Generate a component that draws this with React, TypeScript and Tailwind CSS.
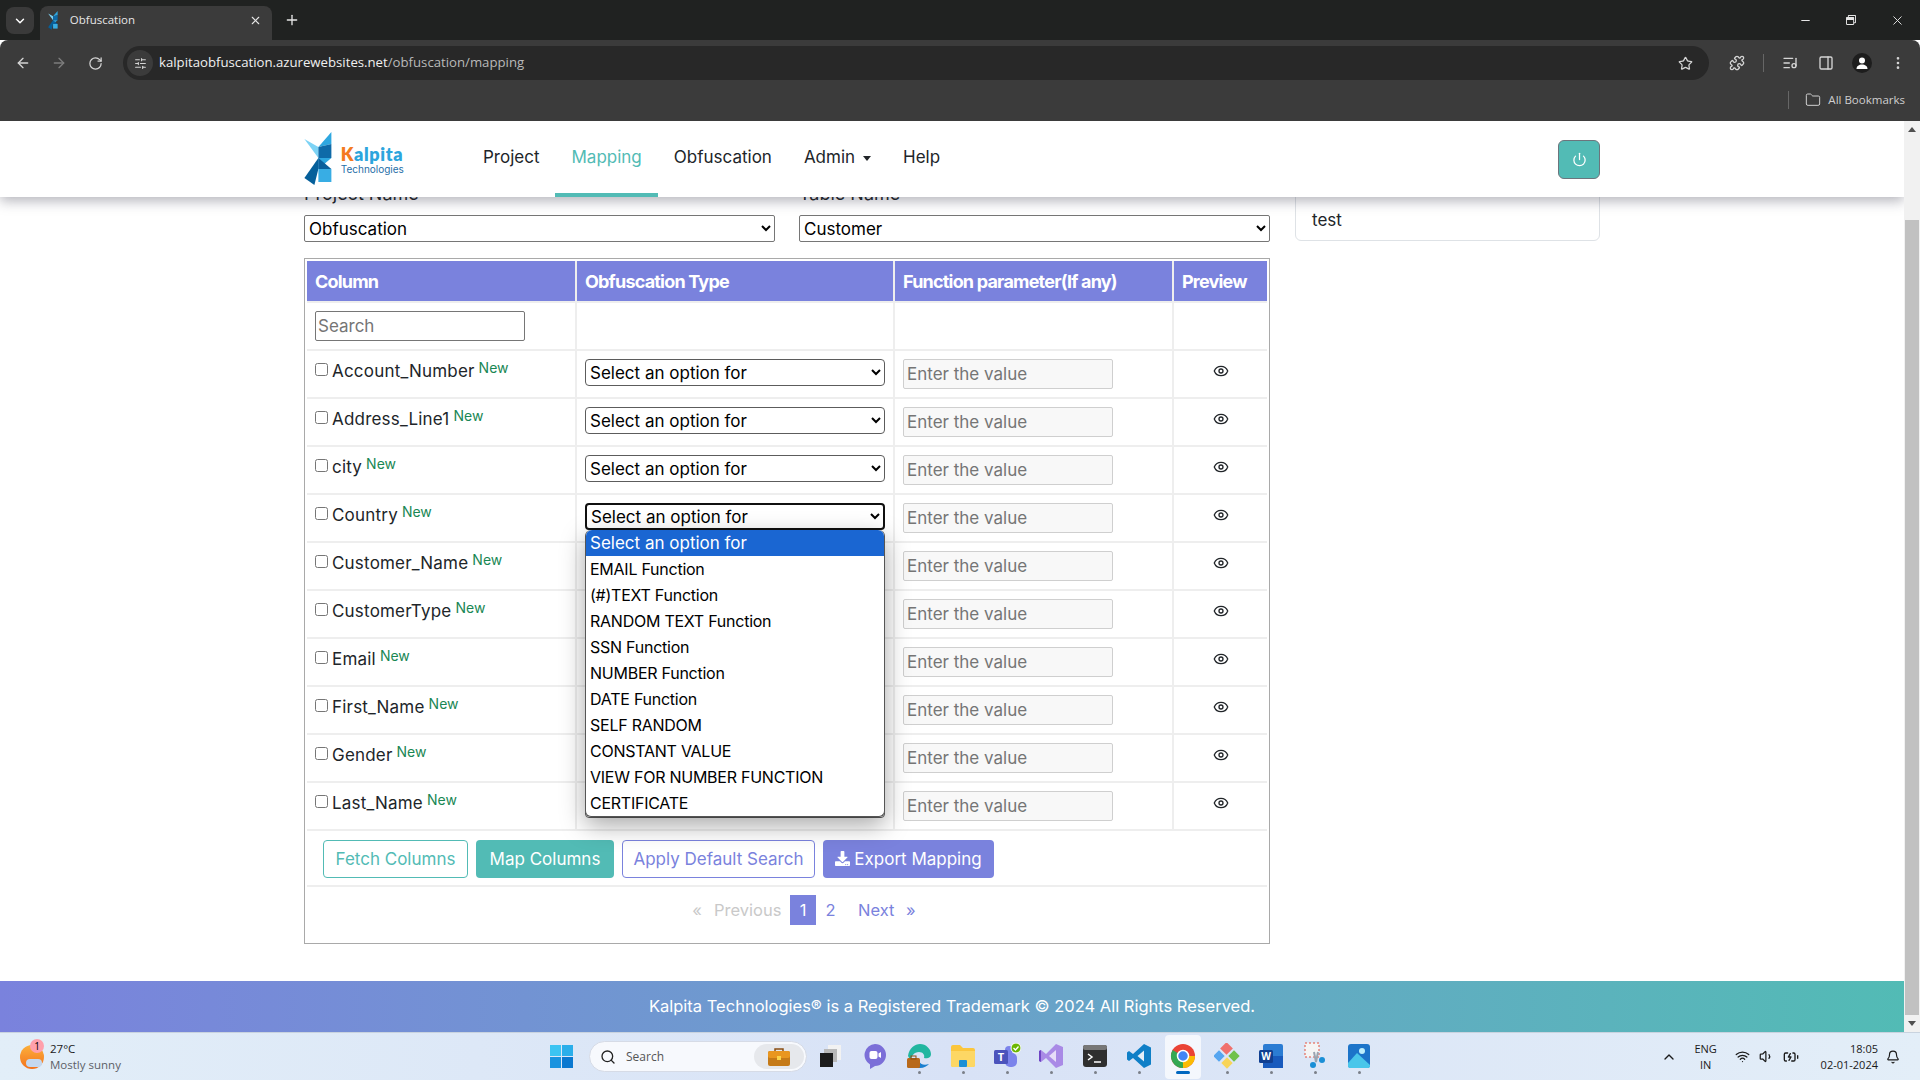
import React from 'react';
import {
  ArrowLeft,
  ArrowRight,
  Bell,
  BatteryCharging,
  ChevronDown,
  ChevronUp,
  Eye,
  Folder,
  ListMusic,
  Minus,
  MoreVertical,
  PanelRight,
  Plus,
  Power,
  Puzzle,
  RotateCw,
  Search,
  SlidersHorizontal,
  Star,
  Volume1,
  Wifi,
  X,
} from 'lucide-react';
import { FaDownload, FaRegWindowRestore } from 'react-icons/fa';

const columns = [
  'Account_Number',
  'Address_Line1',
  'city',
  'Country',
  'Customer_Name',
  'CustomerType',
  'Email',
  'First_Name',
  'Gender',
  'Last_Name',
];

const functionOptions = [
  'Select an option for',
  'EMAIL Function',
  '(#)TEXT Function',
  'RANDOM TEXT Function',
  'SSN Function',
  'NUMBER Function',
  'DATE Function',
  'SELF RANDOM',
  'CONSTANT VALUE',
  'VIEW FOR NUMBER FUNCTION',
  'CERTIFICATE',
];

const LogoMark: React.FC<{ size?: number }> = ({ size = 54 }) => (
  <svg width={size * 0.57} height={size} viewBox="0 0 30 54">
    <polygon points="0,7 14,15 14,26" fill="#7dd3f5" />
    <polygon points="14,15 27,0 27,12" fill="#2ea7e0" />
    <polygon points="14,15 27,12 27,26 14,26" fill="#0e6aa8" />
    <polygon points="14,26 27,26 14,37" fill="#2ea7e0" />
    <polygon points="14,26 14,37 27,37" fill="#0b5f9c" />
    <polygon points="14,26 0,46 10,53 14,37" fill="#055f9a" />
    <polygon points="27,37 14,37 14,50 27,50" fill="#38ade4" />
  </svg>
);

const TaskIcon: React.FC<{ children: React.ReactNode; dot?: boolean; active?: boolean }> = ({ children, dot, active }) => (
  <div className={`w-[36px] h-[44px] flex flex-col items-center justify-center rounded ${active ? 'bg-white/70' : ''}`}>
    <div className="h-[28px] flex items-center justify-center mt-[2px]">{children}</div>
    {active ? (
      <div className="w-[14px] h-[3px] rounded-full bg-[#0067c0] mt-[1px]" />
    ) : (
      <div className={`w-[3px] h-[3px] rounded-full mt-[1px] ${dot ? 'bg-[#7a7f88]' : 'bg-transparent'}`} />
    )}
  </div>
);

const BrowserChrome: React.FC = () => (
  <div className="shrink-0 font-['Open_Sans',sans-serif]">
    <div className="h-[40px] bg-[#202221] flex items-end pl-[6px] relative">
      <div className="w-[28px] h-[27px] mb-[6px] rounded-lg bg-[#3a3a3a] flex items-center justify-center text-white">
        <ChevronDown size={14} strokeWidth={2.5} />
      </div>
      <div className="ml-[6px] w-[232px] h-[34px] bg-[#3b3b3b] rounded-t-lg flex items-center pl-[8px] pr-[10px] pb-[6px]">
        <LogoMark size={19} />
        <span className="ml-[11px] text-[11.5px] text-[#e6e6e6] flex-1">Obfuscation</span>
        <X size={13} className="text-[#e6e6e6]" />
      </div>
      <Plus size={16} className="text-[#e6e6e6] ml-[12px] mb-[12px]" />
      <div className="ml-auto h-[40px] flex items-center text-[#e6e6e6]">
        <div className="w-[46px] flex justify-center"><Minus size={13} /></div>
        <div className="w-[46px] flex justify-center"><FaRegWindowRestore size={10} /></div>
        <div className="w-[46px] flex justify-center"><X size={15} strokeWidth={1.5} /></div>
      </div>
    </div>
    <div className="h-[81px] bg-[#3b3b3b] rounded-t-lg">
      <div className="h-[46px] flex items-center pl-[15px] pr-[14px] text-[#d5d5d5]">
        <ArrowLeft size={16} />
        <ArrowRight size={16} className="ml-[20px] text-[#7d7d7d]" />
        <RotateCw size={15} className="ml-[21px]" />
        <div className="ml-[20px] h-[34px] flex-1 bg-[#282828] rounded-full flex items-center pl-[4px] pr-[16px]">
          <div className="w-[26px] h-[26px] rounded-full bg-[#3b3b3b] flex items-center justify-center">
            <SlidersHorizontal size={13} />
          </div>
          <span className="ml-[6px] text-[13.2px] text-[#f0f0f0]">
            kalpitaobfuscation.azurewebsites.net<span className="text-[#b9b9b9]">/obfuscation/mapping</span>
          </span>
          <Star size={15} className="ml-auto" />
        </div>
        <Puzzle size={16} className="ml-[20px]" />
        <div className="ml-[18px] w-px h-[18px] bg-[#666]" />
        <ListMusic size={16} className="ml-[18px]" />
        <PanelRight size={16} className="ml-[20px]" />
        <div className="ml-[18px] w-[20px] h-[20px] rounded-full bg-[#1d1d1d] flex items-center justify-center">
          <svg width="14" height="14" viewBox="0 0 14 14" fill="#fff">
            <circle cx="7" cy="4.500" r="3" />
            <path d="M1.500 13c0-3 2.500-4.500 5.500-4.500s5.500 1.500 5.500 4.500z" />
          </svg>
        </div>
        <MoreVertical size={16} className="ml-[18px]" />
      </div>
      <div className="h-[35px] pb-[8px] flex items-center justify-end pr-[15px] text-[#cfcfcf]">
        <div className="w-px h-[18px] bg-[#666] mr-[16px]" />
        <Folder size={16} strokeWidth={1.5} />
        <span className="ml-[7px] text-[11.5px]">All Bookmarks</span>
      </div>
    </div>
  </div>
);

const TopNav: React.FC = () => (
  <nav className="relative z-10 h-[76px] bg-white shadow-[0_4px_12px_rgba(40,40,60,0.35)]">
    <div className="w-[1296px] mx-auto h-full flex items-stretch">
      <div className="w-[163px] flex items-center">
        <LogoMark />
        <div className="ml-[6px] pt-[2px]">
          <div className="text-[18px] leading-[18px] font-extrabold text-[#2ca5dd] font-['Lato',sans-serif] tracking-[0.6px]">
            <span className="text-[#f47a20]">K</span>alpita
          </div>
          <div className="text-[10px] leading-[12px] text-[#1f6fa8]">Technologies</div>
        </div>
      </div>
      <a className="px-4 pb-[2px] flex items-center text-[17px] text-[#212529]">Project</a>
      <a className="px-4 flex items-center text-[17px] text-[#52bbb5] border-b-4 border-[#52bbb5] pt-[2px]">Mapping</a>
      <a className="px-4 pb-[2px] flex items-center text-[17px] text-[#212529]">Obfuscation</a>
      <a className="px-4 pb-[2px] flex items-center text-[17px] text-[#212529]">
        Admin
        <span className="ml-[8px] w-0 h-0 border-x-[4.5px] border-x-transparent border-t-[5px] border-t-[#212529]" />
      </a>
      <a className="px-4 pb-[2px] flex items-center text-[17px] text-[#212529]">Help</a>
      <button className="ml-auto self-start mt-[19px] w-[42px] h-[39px] rounded-md bg-[#52bbb5] border border-[#6c757d] flex items-center justify-center text-white">
        <Power size={15} />
      </button>
    </div>
  </nav>
);

const MappingRow: React.FC<{ name: string; open?: boolean }> = ({ name, open }) => (
  <tr className="h-[48px]">
    <td className="border-r-2 border-b-2 border-[#eeeeee] px-2 pt-[8px] align-top">
      <div className="flex items-start h-[28px]">
        <input type="checkbox" className="w-[13px] h-[13px] mt-[4px] mr-[4px]" />
        <span className="text-[17px] leading-[24px] text-[#212529] tracking-[0.2px]">{name}</span>
        <span className="ml-[4px] text-[14px] leading-[18px] text-[#198754]">New</span>
      </div>
    </td>
    <td className="border-r-2 border-b-2 border-[#eeeeee] px-2 pt-[8px] align-top">
      <div className="relative w-[300px]">
        <select className={`block w-[300px] h-[27px] bg-white rounded-[4px] text-[17px] text-black ${open ? 'border-2 border-[#101010]' : 'border border-[#5c5c5c]'}`}>
          <option>Select an option for</option>
        </select>
        {open && (
          <div className="absolute z-20 top-full left-0 w-[300px] bg-white rounded-md border-b border-x border-[#555] shadow-[0_8px_24px_rgba(0,0,0,0.35)]">
            {functionOptions.map((option, i) => (
              <div
                key={option}
                className={`h-[26px] px-[4px] leading-[26px] whitespace-nowrap ${i === 0 ? 'bg-[#1a66d2] text-white rounded-t-md text-[17px]' : 'text-black text-[16px] tracking-[-0.25px]'}`}
              >
                {option}
              </div>
            ))}
          </div>
        )}
      </div>
    </td>
    <td className="border-r-2 border-b-2 border-[#eeeeee] px-2 pt-[8px] align-top">
      <input
        placeholder="Enter the value"
        className="block w-[210px] h-[30px] bg-[#f8f8f8] border border-[#cfcfcf] rounded-[2px] px-[3px] text-[17px] placeholder:text-[#757575]"
      />
    </td>
    <td className="border-b-2 border-[#eeeeee] pt-[12px] align-top">
      <Eye size={16} className="mx-auto text-[#212529]" />
    </td>
  </tr>
);

const MappingTable: React.FC = () => (
  <div className="border border-[#a9a9a9] p-[2px]">
    <table className="w-[960px] table-fixed border-separate border-spacing-0">
      <colgroup>
        <col className="w-[270px]" />
        <col className="w-[318px]" />
        <col className="w-[279px]" />
        <col className="w-[93px]" />
      </colgroup>
      <thead>
        <tr className="h-[42px]">
          {['Column', 'Obfuscation Type', 'Function parameter(If any)', 'Preview'].map((title, i) => (
            <th
              key={title}
              className={`bg-[#7a82dd] border-b-2 border-[#eeeeee] text-left text-white text-[18px] font-bold tracking-[-0.8px] ${i < 3 ? 'border-r-2 pl-[8px]' : 'pl-[8px]'}`}
            >
              {title}
            </th>
          ))}
        </tr>
      </thead>
      <tbody>
        <tr className="h-[48px]">
          <td className="border-r-2 border-b-2 border-[#eeeeee] px-2 align-middle">
            <input
              placeholder="Search"
              className="block w-[210px] h-[30px] bg-white border border-[#767676] rounded-[2px] px-[2px] text-[17px] placeholder:text-[#757575]"
            />
          </td>
          <td className="border-r-2 border-b-2 border-[#eeeeee]" />
          <td className="border-r-2 border-b-2 border-[#eeeeee]" />
          <td className="border-b-2 border-[#eeeeee]" />
        </tr>
        {columns.map((name) => (
          <MappingRow key={name} name={name} open={name === 'Country'} />
        ))}
        <tr className="h-[56px]">
          <td colSpan={4} className="border-b-2 border-[#eeeeee] pl-[16px] pt-[1px]">
            <div className="flex gap-2 text-[17px] leading-[36px]">
              <button className="w-[145px] h-[38px] rounded-[4px] border border-[#52bbb5] text-[#52bbb5] bg-white">Fetch Columns</button>
              <button className="w-[138px] h-[38px] rounded-[4px] bg-[#52bbb5] text-white">Map Columns</button>
              <button className="w-[193px] h-[38px] rounded-[4px] border border-[#7a82dd] text-[#7a82dd] bg-white">Apply Default Search</button>
              <button className="w-[171px] h-[38px] rounded-[4px] bg-[#7a82dd] text-white flex items-center justify-center gap-[4px]">
                <FaDownload size={15} />
                Export Mapping
              </button>
            </div>
          </td>
        </tr>
      </tbody>
    </table>
    <div className="h-[54px] pt-[8px] flex items-start pl-[377px] text-[16.5px] leading-[30px]">
      <span className="w-[26px] text-[#c9c9c9] text-center">«</span>
      <span className="text-[#c9c9c9] ml-[4px] w-[76px]">Previous</span>
      <span className="w-[26px] h-[30px] bg-[#7a82dd] text-white text-center">1</span>
      <span className="w-[34px] pr-[5px] text-[#7a82dd] text-center">2</span>
      <span className="text-[#7a82dd] ml-[8px] w-[42px] text-left">Next</span>
      <span className="text-[#7a82dd] ml-[6px]">»</span>
    </div>
  </div>
);

const WindowsTaskbar: React.FC = () => (
  <div className="shrink-0 h-[48px] bg-gradient-to-r from-[#e2eef8] via-[#d8e2f6] to-[#e3eef8] border-t border-[#c9d3df] flex items-center font-['Open_Sans',sans-serif] text-[#1a1a1a] relative">
    <div className="w-[550px] pl-[20px] flex items-center">
      <div className="relative w-[24px] h-[24px] rounded-full bg-gradient-to-b from-[#fbb03b] to-[#f2711c]">
        <div className="absolute left-[10px] top-[-6px] w-[14px] h-[14px] rounded-full bg-[#ffa0ac] text-[10px] leading-[14px] text-center text-black">1</div>
        <div className="absolute left-[6px] bottom-[2px] w-[16px] h-[8px] rounded-full bg-[#c4d8f0]" />
      </div>
      <div className="ml-[6px]">
        <div className="text-[11.5px] leading-[16px]">27°C</div>
        <div className="text-[11.5px] leading-[16px] text-[#5c6066]">Mostly sunny</div>
      </div>
    </div>
    <div className="flex items-center">
      <svg width="23" height="23" viewBox="0 0 23 23" className="mr-[16px]">
        <rect x="0" y="0" width="11" height="11" fill="#3cc4f2" />
        <rect x="12" y="0" width="11" height="11" fill="#2aaeea" />
        <rect x="0" y="12" width="11" height="11" fill="#1a93df" />
        <rect x="12" y="12" width="11" height="11" fill="#0a78d0" />
      </svg>
      <div className="w-[218px] h-[31px] rounded-full bg-[#f7f9fd] border border-[#d6dbe6] flex items-center pl-[10px] pr-[2px]">
        <Search size={16} className="text-[#222]" />
        <span className="ml-[10px] text-[12px] text-[#555]">Search</span>
        <div className="ml-auto w-[50px] h-[25px] rounded-full bg-[#e6e8ec] flex items-center justify-center">
          <svg width="24" height="20" viewBox="0 0 24 20">
            <path d="M8 4V2h8v2" fill="none" stroke="#8a4e12" strokeWidth="1.500" />
            <rect x="1" y="4" width="22" height="15" rx="2" fill="#c57a18" />
            <rect x="1" y="4" width="22" height="7" rx="2" fill="#e9961f" />
            <rect x="10" y="9" width="4" height="4" fill="#fbd34a" />
          </svg>
        </div>
      </div>
    </div>
    <div className="ml-[6px] flex items-center gap-[8px]">
      <TaskIcon>
        <svg width="24" height="24" viewBox="0 0 24 24">
          <rect x="9" y="1" width="13" height="15" fill="#f2f2f2" />
          <rect x="5" y="5" width="13" height="13" fill="#b9b9b9" />
          <rect x="1" y="9" width="13" height="14" fill="#1c1c1c" />
        </svg>
      </TaskIcon>
      <TaskIcon>
        <svg width="24" height="26" viewBox="0 0 24 26">
          <path d="M12 1a11 11 0 0 1 0 22l-5 3v-4.500A11 11 0 0 1 12 1z" fill="#7b6fd8" />
          <rect x="6.500" y="8" width="8" height="8" rx="2" fill="#fff" />
          <path d="M15.500 10.500 18 9v6l-2.500-1.500z" fill="#fff" />
        </svg>
      </TaskIcon>
      <TaskIcon dot>
        <svg width="26" height="26" viewBox="0 0 26 26">
          <path d="M2 13C3 5 9 1 14 1c6 0 11 5 11 10 0 4-4 5-7 4 1-3-1-6-5-6-5 0-8 4-8 9z" fill="#21b6a0" />
          <path d="M5 18c0 5 5 7 9 7 4 0 7-2 9-4-5 2-9 0-10-3z" fill="#1a7fd0" />
          <rect x="1" y="15" width="13" height="10" rx="1.500" fill="#b8691a" />
          <rect x="5" y="13" width="5" height="3" fill="none" stroke="#8a4e12" />
        </svg>
      </TaskIcon>
      <TaskIcon dot>
        <svg width="26" height="26" viewBox="0 0 26 26">
          <path d="M1 4a2 2 0 0 1 2-2h7l3 3h10a2 2 0 0 1 2 2v15a2 2 0 0 1-2 2H3a2 2 0 0 1-2-2z" fill="#fbc63d" />
          <path d="M1 8h24v14a2 2 0 0 1-2 2H3a2 2 0 0 1-2-2z" fill="#fdd764" />
          <rect x="9" y="17" width="8" height="7" rx="1" fill="#1b8fd6" />
        </svg>
      </TaskIcon>
      <TaskIcon dot>
        <svg width="28" height="26" viewBox="0 0 28 26">
          <circle cx="16" cy="7" r="4" fill="#7b83eb" />
          <rect x="12" y="10" width="12" height="14" rx="5" fill="#7b83eb" />
          <rect x="1" y="7" width="14" height="14" rx="1.500" fill="#4b53bc" />
          <text x="8" y="18" fontSize="11" fontWeight="700" fill="#fff" textAnchor="middle">T</text>
          <circle cx="23" cy="5" r="5" fill="#6bb700" stroke="#fff" />
          <path d="m20.500 5 2 2 3-3.500" stroke="#fff" strokeWidth="1.300" fill="none" />
        </svg>
      </TaskIcon>
      <TaskIcon dot>
        <svg width="26" height="26" viewBox="0 0 26 26">
          <path d="M18 1l7 3v18l-7 3-10-10-5 4-2-1V8l2-1 5 4z" fill="#a98ae6" />
          <path d="M18 7v12l-7-6z" fill="#e7ddf8" />
          <path d="M1 8l2-1v12l-2-1z" fill="#6f45c4" />
        </svg>
      </TaskIcon>
      <TaskIcon dot>
        <svg width="26" height="24" viewBox="0 0 26 24">
          <rect x="1" y="1" width="24" height="22" rx="3" fill="#2f2f2f" />
          <rect x="1" y="1" width="24" height="5" rx="2" fill="#777" />
          <path d="m6 10 4 3-4 3" stroke="#fff" strokeWidth="1.500" fill="none" />
          <path d="M12 18h7" stroke="#fff" strokeWidth="1.500" />
        </svg>
      </TaskIcon>
      <TaskIcon dot>
        <svg width="26" height="26" viewBox="0 0 26 26">
          <path d="M18 1l7 3.500v17L18 25 7 15l-4 3-2-1.500v-7L3 8l4 3z" fill="#0f7fc7" />
          <path d="M18 7.500 11.500 13 18 18.500z" fill="#e2eef8" />
        </svg>
      </TaskIcon>
      <TaskIcon active>
        <svg width="26" height="26" viewBox="0 0 26 26">
          <circle cx="13" cy="13" r="12" fill="#ea4335" />
          <path d="M13 13 2.600 7A12 12 0 0 0 13 25l6-10z" fill="#34a853" />
          <path d="M13 13h12a12 12 0 0 1-12 12z" fill="#fbbc05" />
          <circle cx="13" cy="13" r="5.500" fill="#4285f4" stroke="#fff" strokeWidth="1.500" />
        </svg>
      </TaskIcon>
      <TaskIcon dot>
        <svg width="26" height="26" viewBox="0 0 26 26">
          <rect x="8" y="1" width="9" height="9" transform="rotate(45 12.500 5.500)" fill="#f0706c" />
          <rect x="1" y="9" width="8" height="8" transform="rotate(45 5 13)" fill="#55a5f0" />
          <rect x="16" y="9" width="8" height="8" transform="rotate(45 20 13)" fill="#70c24a" />
          <rect x="9" y="16" width="8" height="8" transform="rotate(45 13 20)" fill="#f8d458" />
        </svg>
      </TaskIcon>
      <TaskIcon dot>
        <svg width="26" height="26" viewBox="0 0 26 26">
          <rect x="5" y="1" width="20" height="24" rx="2" fill="#2b7cd3" />
          <rect x="5" y="13" width="20" height="12" fill="#185abd" />
          <rect x="1" y="7" width="14" height="13" rx="1.500" fill="#103f91" />
          <text x="8" y="17" fontSize="10" fontWeight="700" fill="#fff" textAnchor="middle">W</text>
        </svg>
      </TaskIcon>
      <TaskIcon dot>
        <svg width="26" height="28" viewBox="0 0 26 28">
          <rect x="3" y="1" width="14" height="14" fill="#f4f4f4" stroke="#e2503f" strokeDasharray="2 2" />
          <path d="m12 10 2 10M16 10l-2 10" stroke="#9aa5b1" strokeWidth="2" />
          <circle cx="11" cy="23" r="3" fill="#1b8fd6" />
          <circle cx="20" cy="18" r="3" fill="#1b8fd6" />
        </svg>
      </TaskIcon>
      <TaskIcon dot>
        <svg width="24" height="26" viewBox="0 0 24 26">
          <rect x="1" y="1" width="22" height="24" rx="3" fill="#1c74c9" />
          <path d="M1 20 10 10l13 12v1a2 2 0 0 1-2 2H3a2 2 0 0 1-2-2z" fill="#49c6ea" />
          <circle cx="15" cy="8" r="3" fill="#bdeefc" />
        </svg>
      </TaskIcon>
    </div>
    <div className="ml-auto flex items-center pr-[20px]">
      <ChevronUp size={16} className="mr-[11px]" />
      <div className="w-[36px] text-center text-[11px] leading-[16px] mr-[11px]">
        ENG
        <br />
        IN
      </div>
      <Wifi size={15} className="mr-[9px]" />
      <Volume1 size={15} className="mr-[9px]" />
      <BatteryCharging size={16} className="mr-[22px]" />
      <div className="text-right text-[11px] leading-[16px]">
        18:05
        <br />
        02-01-2024
      </div>
      <Bell size={14} className="ml-[8px]" />
    </div>
  </div>
);

const Scrollbar: React.FC = () => (
  <div className="w-[16px] bg-[#f1f1f1] flex flex-col items-center z-20">
    <div className="h-[17px] flex items-center justify-center">
      <div className="w-0 h-0 border-x-[4px] border-x-transparent border-b-[5px] border-b-[#505050]" />
    </div>
    <div className="mt-[82px] w-[14px] h-[796px] bg-[#c1c1c1]" />
    <div className="mt-auto h-[17px] flex items-center justify-center">
      <div className="w-0 h-0 border-x-[4px] border-x-transparent border-t-[5px] border-t-[#505050]" />
    </div>
  </div>
);

const App: React.FC = () => {
  return (
    <div className="w-[1920px] h-[1080px] overflow-hidden flex flex-col bg-white font-['Inter',sans-serif]">
      <BrowserChrome />
      <div className="flex-1 min-h-0 flex">
        <div className="flex-1 min-w-0 flex flex-col overflow-hidden">
          <TopNav />
          <main className="w-[1296px] mx-auto mt-[-17px] flex gap-[25px] items-start">
            <div className="w-[966px]">
              <div className="grid grid-cols-2 gap-x-[24px]">
                <div>
                  <label className="block h-[27px] mb-[8px] text-[18px] leading-[27px] text-[#212529]">Project Name</label>
                  <select className="block w-full h-[27px] bg-white border border-[#767676] rounded-[2px] text-[17px] text-black">
                    <option>Obfuscation</option>
                  </select>
                </div>
                <div>
                  <label className="block h-[27px] mb-[8px] text-[18px] leading-[27px] text-[#212529]">Table Name</label>
                  <select className="block w-full h-[27px] bg-white border border-[#767676] rounded-[2px] text-[17px] text-black">
                    <option>Customer</option>
                  </select>
                </div>
              </div>
              <div className="mt-[16px]">
                <MappingTable />
              </div>
            </div>
            <div className="w-[305px] h-[61px] border border-[#dee2e6] rounded-md px-4 pb-[7px] flex items-end text-[17px] text-[#212529]">test</div>
          </main>
          <footer className="mt-auto h-[51px] bg-gradient-to-r from-[#7a82dd] to-[#52bbb5] flex items-center justify-center text-[16.5px] text-white">
            Kalpita Technologies® is a Registered Trademark © 2024 All Rights Reserved.
          </footer>
        </div>
        <Scrollbar />
      </div>
      <WindowsTaskbar />
    </div>
  );
};

export default App;
